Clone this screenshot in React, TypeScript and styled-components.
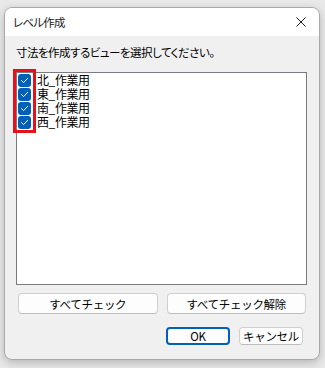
import React from 'react';
import styled, { createGlobalStyle } from 'styled-components';

const GlobalStyle = createGlobalStyle`
  html, body {
    margin: 0;
    padding: 0;
    background: #e9e9e9;
  }
  * {
    box-sizing: border-box;
  }
`;

const Page = styled.div`
  width: 325px;
  height: 368px;
  padding: 7px 5px 8px 4px;
  font-family: 'Noto Sans CJK JP', 'Noto Sans', sans-serif;
  font-feature-settings: 'palt';
  color: #000;
`;

const Window = styled.div`
  width: 316px;
  height: 353px;
  border: 1px solid #a9a9a9;
  border-radius: 8px;
  overflow: hidden;
  display: flex;
  flex-direction: column;
  background: #f0f0f0;
  box-shadow: 0 3px 10px rgba(0, 0, 0, 0.22);
`;

const TitleBar = styled.div`
  height: 28px;
  background: #fff;
  display: flex;
  align-items: center;
  justify-content: space-between;
  padding: 0 13px 0 8px;
`;

const Title = styled.span`
  font-size: 11.5px;
  letter-spacing: -0.8px;
  line-height: 16px;
  color: #1a1a1a;
`;

const CloseIcon = styled.svg`
  width: 10px;
  height: 10px;
  display: block;
`;

const Body = styled.div`
  flex: 1;
  padding: 8px 12px 0 11px;
  display: flex;
  flex-direction: column;
`;

const Prompt = styled.div`
  font-size: 11.5px;
  letter-spacing: -0.5px;
  line-height: 16px;
  margin-bottom: 12px;
`;

const ListBox = styled.div`
  position: relative;
  height: 213px;
  background: #fff;
  border: 1px solid #7a7a80;
  padding: 0 0 0 1px;
`;

const Row = styled.label`
  height: 14px;
  display: flex;
  align-items: center;
  gap: 6px;
  font-size: 12px;
  font-feature-settings: normal;
  letter-spacing: -0.4px;
  line-height: 14px;
  white-space: nowrap;
`;

const CheckBox = styled.span<{ checked?: boolean }>`
  width: 13px;
  height: 13px;
  border-radius: 3px;
  background: ${p => (p.checked ? '#005fb8' : '#fff')};
  border: ${p => (p.checked ? 'none' : '1px solid #888')};
  display: flex;
  align-items: center;
  justify-content: center;
  flex-shrink: 0;
`;

const Highlight = styled.div`
  position: absolute;
  left: -4px;
  top: -4px;
  width: 23px;
  height: 64px;
  border: 3px solid #e8101a;
  pointer-events: none;
`;

const ButtonRow = styled.div`
  display: flex;
  gap: 9px;
  margin: 8px 1px 0 2px;
`;

const Button = styled.button<{ isDefault?: boolean; wide?: boolean }>`
  font-family: inherit;
  font-size: 11.5px;
  letter-spacing: -0.3px;
  line-height: 14px;
  color: #000;
  background: #fdfdfd;
  border: ${p => (p.isDefault ? '2px solid #005fb8' : '1px solid #cfcfcf')};
  border-bottom-color: ${p => (p.isDefault ? '#005fb8' : '#bdbdbd')};
  border-radius: 4px;
  height: ${p => (p.wide ? '21px' : '18px')};
  width: ${p => (p.wide ? 'auto' : '64px')};
  flex: ${p => (p.wide ? '1' : 'none')};
  padding: 0;
  display: flex;
  align-items: center;
  justify-content: center;
`;

const Footer = styled.div`
  display: flex;
  justify-content: flex-end;
  gap: 9px;
  margin: 13px 4px 0 0;
`;

const Check = () => (
  <svg width="9" height="9" viewBox="0 0 9 9">
    <path d="M1.5 4.6 L3.6 6.6 L7.6 2.4" fill="none" stroke="#fff" strokeWidth="1" strokeLinecap="round" strokeLinejoin="round" />
  </svg>
);

const views = ['北_作業用', '東_作業用', '南_作業用', '西_作業用'];

const App: React.FC = () => {
  return (
    <Page>
      <GlobalStyle />
      <Window>
        <TitleBar>
          <Title>レベル作成</Title>
          <CloseIcon viewBox="0 0 10 10">
            <path d="M0.5 0.5 L9.5 9.5 M9.5 0.5 L0.5 9.5" stroke="#1a1a1a" strokeWidth="1" />
          </CloseIcon>
        </TitleBar>
        <Body>
          <Prompt>寸法を作成するビューを選択してください。</Prompt>
          <ListBox>
            {views.map(v => (
              <Row key={v}>
                <CheckBox checked>
                  <Check />
                </CheckBox>
                {v}
              </Row>
            ))}
            <Highlight />
          </ListBox>
          <ButtonRow>
            <Button wide>すべてチェック</Button>
            <Button wide>すべてチェック解除</Button>
          </ButtonRow>
          <Footer>
            <Button isDefault>OK</Button>
            <Button>キャンセル</Button>
          </Footer>
        </Body>
      </Window>
    </Page>
  );
};

export default App;
